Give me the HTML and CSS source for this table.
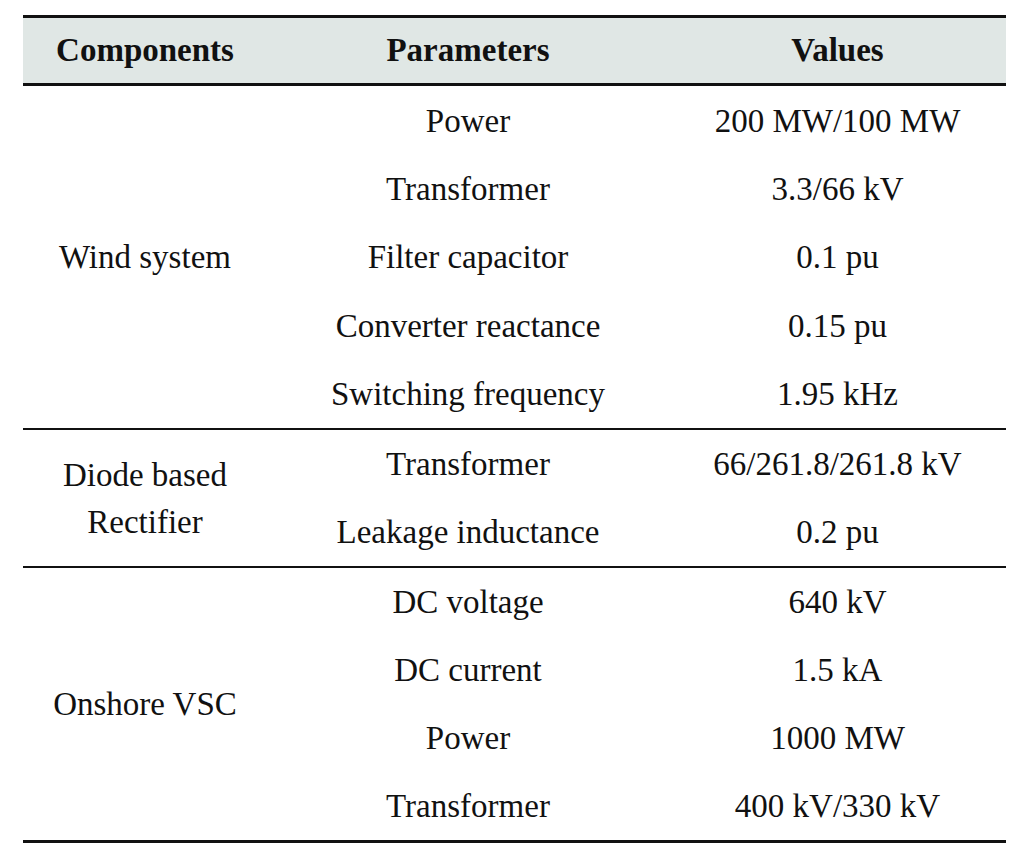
FILE: index.html
```html
<!DOCTYPE html>
<html>
<head>
<meta charset="utf-8">
<link rel="stylesheet" href="styles.css">
</head>
<body>
<table class="params">
  <thead>
    <tr class="head-row">
      <th class="col-comp">Components</th>
      <th class="col-param">Parameters</th>
      <th class="col-val">Values</th>
    </tr>
  </thead>
  <tbody class="section s-wind">
    <tr><td class="comp" rowspan="5">Wind system</td><td>Power</td><td>200 MW/100 MW</td></tr>
    <tr><td>Transformer</td><td>3.3/66 kV</td></tr>
    <tr><td>Filter capacitor</td><td>0.1 pu</td></tr>
    <tr><td>Converter reactance</td><td>0.15 pu</td></tr>
    <tr><td>Switching frequency</td><td>1.95 kHz</td></tr>
  </tbody>
  <tbody class="section s-diode">
    <tr><td class="comp two-line" rowspan="2">Diode based<br>Rectifier</td><td>Transformer</td><td>66/261.8/261.8 kV</td></tr>
    <tr><td>Leakage inductance</td><td>0.2 pu</td></tr>
  </tbody>
  <tbody class="section s-vsc last">
    <tr><td class="comp" rowspan="4">Onshore VSC</td><td>DC voltage</td><td>640 kV</td></tr>
    <tr><td>DC current</td><td>1.5 kA</td></tr>
    <tr><td>Power</td><td>1000 MW</td></tr>
    <tr><td>Transformer</td><td>400 kV/330 kV</td></tr>
  </tbody>
</table>
</body>
</html>
```

FILE: styles.css
```css
html, body {
  margin: 0;
  padding: 0;
  background: #ffffff;
}

body {
  font-family: "Liberation Serif", "Times New Roman", serif;
  color: #111111;
}

.params {
  margin: 15px 0 0 23px;
  width: 983px;
  border-collapse: collapse;
  border-top: 3px solid #111;
  border-bottom: 3px solid #111;
  font-size: 33px;
  table-layout: fixed;
}

.col-comp { width: 244px; }
.col-param { width: 402px; }
.col-val { width: 337px; }

.head-row {
  background: #e0e7e5;
  border-bottom: 3px solid #111;
}

.head-row th {
  height: 65px;
  padding: 0;
  font-weight: bold;
  text-align: center;
  vertical-align: middle;
}

.section {
  border-bottom: 2px solid #111;
}

.section.last {
  border-bottom: 3px solid #111;
}

.params td {
  height: 66px;
  padding: 2px 0 0 0;
  text-align: center;
  vertical-align: middle;
  white-space: nowrap;
}

.s-wind td { height: 66.4px; }

.params td.comp {
  height: auto;
  line-height: 47px;
}
```
